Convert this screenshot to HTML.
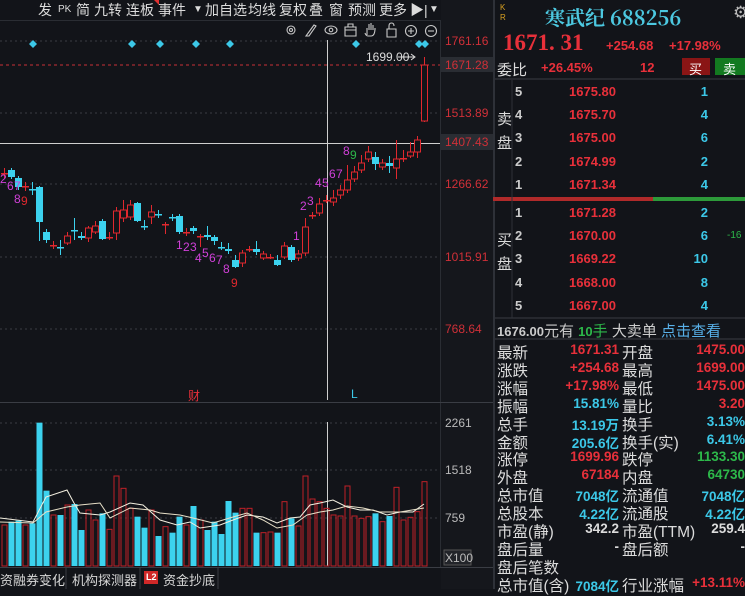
<!DOCTYPE html>
<html><head><meta charset="utf-8">
<style>
*{margin:0;padding:0;box-sizing:border-box}
body{width:745px;height:589px;background:#121419;overflow:hidden;position:relative;font-family:"Liberation Sans","Noto Sans CJK SC",sans-serif;color:#d8d8d8}
.a{position:absolute;white-space:nowrap}
.tb{font-size:14px;color:#dcdcdc;top:0px}
.r{color:#e8303a}.c{color:#3cc8e8}.g{color:#2db84a}.w{color:#dcdcdc}
.ax{font-size:12px;color:#d03038;left:445px}
.ob{font-size:13px;font-weight:bold}
.st{font-size:15.5px}
.sv{font-size:13.5px;font-weight:bold;text-align:right}
</style></head><body>
<svg class="a" style="left:0;top:0" width="745" height="589" id="sv">
<rect x="0" y="20" width="440" height="1" fill="#2a2d33"/>
<rect x="441" y="0" width="52" height="589" fill="#15171c"/>
<rect x="440" y="20" width="1" height="548" fill="#2a2d33"/>
<rect x="0" y="402" width="493" height="1" fill="#3a3d44"/>
<rect x="0" y="567" width="493" height="1" fill="#3a3d44"/>
<rect x="493" y="0" width="2" height="589" fill="#2e3138"/>
<g stroke="#3a3d44" stroke-dasharray="2,3">
<line x1="0" y1="41" x2="440" y2="41"/><line x1="0" y1="113" x2="440" y2="113"/><line x1="0" y1="184" x2="440" y2="184"/><line x1="0" y1="257" x2="440" y2="257"/><line x1="0" y1="329" x2="440" y2="329"/>
<line x1="0" y1="423" x2="440" y2="423"/><line x1="0" y1="470" x2="440" y2="470"/><line x1="0" y1="518" x2="440" y2="518"/>
</g>
<line x1="0" y1="65" x2="440" y2="65" stroke="#c83038" stroke-dasharray="3,3"/>
<line x1="327.5" y1="40" x2="327.5" y2="400" stroke="#cfcfcf"/>
<line x1="327.5" y1="422" x2="327.5" y2="566" stroke="#cfcfcf"/>
<line x1="0" y1="143.5" x2="440" y2="143.5" stroke="#cfcfcf"/>
<g id="cd"></g><g id="vb"></g>
<polyline fill="none" stroke="#f4f0e0" stroke-width="1" points="0,518 33,522 46,497 67,490 74,503 80,513 100,515 110,512 130,503 143,505 160,520 177,525 190,522 200,528 220,525 233,520 247,515 263,517 277,523 290,518 300,517 310,505 320,503 333,500 347,507 360,510 373,510 387,515 400,512 413,512 424,504"/>
<polyline fill="none" stroke="#e8e0c8" stroke-width="1" points="0,522 33,523 46,512 67,507 80,505 100,503 110,518 130,508 150,510 160,513 180,515 193,518 213,523 233,517 247,513 263,520 277,528 293,525 307,515 320,512 333,510 347,506 363,508 380,512 400,512 424,508"/>
<g fill="#3cc8e8" id="dm"></g>
<line x1="398" y1="57" x2="414" y2="57" stroke="#ddd"/><path d="M411,54 L415,57 L411,60" stroke="#ddd" fill="none"/>
<g stroke="#c8c8c8" fill="none" stroke-width="1.1">
<circle cx="291" cy="30" r="4"/><circle cx="291" cy="30" r="1.5"/>
<path d="M306,36 L314,25 L316,26 L309,36 Z"/>
<ellipse cx="331" cy="30" rx="6" ry="4"/><circle cx="331" cy="30" r="1.8"/>
<path d="M345,27 h11 v9 h-11 Z M348,27 v-3 h5 v3 M345,30 h11"/>
<path d="M367,35 v-7 M369,30 v-6 M371,30 v-7 M373,30 v-5 M375,30 v-2 q0,8 -4,8 h-3 q-2,0 -3,-3"/>
<path d="M387,29 h9 v8 h-9 Z M389,29 v-3 q0,-3 2.5,-3 q2.5,0 2.5,3"/>
<circle cx="411" cy="31" r="5.5"/><path d="M408,31 h6 M411,28 v6"/>
<circle cx="431" cy="31" r="5.5"/><path d="M428,31 h6"/>
</g>
<rect x="441" y="57" width="52" height="15" fill="#2a2d33"/>
<rect x="441" y="134" width="52" height="16" fill="#2a2d33"/>
<rect x="444" y="550" width="27" height="15" fill="#222429" stroke="#555"/>
<rect x="493" y="197" width="160" height="4" fill="#b02a2a"/><rect x="653" y="197" width="92" height="4" fill="#2d9a3a"/>
<line x1="495" y1="318" x2="745" y2="318" stroke="#3a3d44"/>
<line x1="495" y1="339" x2="745" y2="339" stroke="#3a3d44"/>
<line x1="495" y1="79" x2="745" y2="79" stroke="#3a3d44"/>
<line x1="512" y1="80" x2="512" y2="318" stroke="#2e3138"/>
<rect x="682" y="58" width="28" height="17" fill="#8a1515"/><rect x="715" y="58" width="30" height="17" fill="#137a20"/>
<line x1="66" y1="568" x2="66" y2="589" stroke="#3a3d44"/><line x1="140" y1="568" x2="140" y2="589" stroke="#3a3d44"/><line x1="218" y1="568" x2="218" y2="589" stroke="#3a3d44"/>
<rect x="144" y="571" width="14" height="13" fill="#d02828"/>
</svg>

<div class="a tb" style="left:38px">发</div>
<div class="a tb" style="left:58px;font-size:10px;top:4px">PK</div>
<div class="a tb" style="left:76px">简</div>
<div class="a tb" style="left:94px">九转</div>
<div class="a tb" style="left:126px">连板</div>
<div class="a tb" style="left:158px">事件</div>
<div class="a tb" style="left:193px;font-size:10px;top:4px">▼</div>
<div class="a tb" style="left:205px">加自选</div>
<div class="a tb" style="left:248px">均线</div>
<div class="a tb" style="left:279px">复权</div>
<div class="a tb" style="left:309px">叠</div>
<div class="a tb" style="left:329px">窗</div>
<div class="a tb" style="left:348px">预测</div>
<div class="a tb" style="left:379px">更多</div>
<div class="a tb" style="left:410px">▶|</div>
<div class="a tb" style="left:429px;font-size:10px;top:4px">▼</div>
<div class="a" style="left:154px;top:0;width:0;height:0;border-left:5px solid transparent;border-top:5px solid #e03030"></div>

<div class="a ax" style="top:34px">1761.16</div>
<div class="a ax" style="top:58px">1671.28</div>
<div class="a ax" style="top:106px">1513.89</div>
<div class="a ax" style="top:135px">1407.43</div>
<div class="a ax" style="top:177px">1266.62</div>
<div class="a ax" style="top:250px">1015.91</div>
<div class="a ax" style="top:322px">768.64</div>
<div class="a" style="left:445px;top:416px;font-size:12px;color:#bbb">2261</div>
<div class="a" style="left:445px;top:463px;font-size:12px;color:#bbb">1518</div>
<div class="a" style="left:445px;top:511px;font-size:12px;color:#bbb">759</div>
<div class="a" style="left:445px;top:551px;font-size:12px;color:#bbb">X100</div>
<div class="a" style="left:366px;top:50px;font-size:12px;color:#ddd">1699.00</div>
<div class="a r" style="left:188px;top:387px;font-size:12px">财</div>
<div class="a c" style="left:351px;top:387px;font-size:12px">L</div>

<div class="a" style="left:0;top:570px;font-size:13px">资融券变化</div>
<div class="a" style="left:72px;top:570px;font-size:13px">机构探测器</div>
<div class="a" style="left:146px;top:572px;font-size:9px;color:#fff;font-weight:bold">L2</div>
<div class="a" style="left:163px;top:570px;font-size:13px">资金抄底</div>

<div class="a" style="left:500px;top:3px;font-size:8px;color:#d8a020;line-height:10px">K<br>R</div>
<div class="a" style="left:545px;top:2px;font-size:20px;color:#4cc8e0;font-family:'Noto Serif CJK SC','Liberation Serif',serif;font-weight:bold">寒武纪 688256</div>
<div class="a" style="left:733px;top:3px;font-size:17px;color:#bbb">⚙</div>
<div class="a r" style="left:503px;top:30px;font-size:23px;font-family:'Liberation Serif',serif;font-weight:bold">1671. 31</div>
<div class="a r" style="left:606px;top:38px;font-size:13px;font-weight:bold">+254.68</div>
<div class="a r" style="left:669px;top:38px;font-size:13px;font-weight:bold">+17.98%</div>
<div class="a w" style="left:497px;top:59px;font-size:15px">委比</div>
<div class="a r" style="left:541px;top:60px;font-size:13px;font-weight:bold">+26.45%</div>
<div class="a r" style="left:640px;top:60px;font-size:13px;font-weight:bold">12</div>
<div class="a" style="left:689px;top:59px;font-size:13px;color:#fff">买</div>
<div class="a" style="left:723px;top:59px;font-size:13px;color:#fff">卖</div>

<div class="a w" style="left:497px;top:108px;font-size:15px;line-height:24px">卖<br>盘</div>
<div class="a w" style="left:497px;top:229px;font-size:15px;line-height:24px">买<br>盘</div>
<div id="ob"></div>
<div class="a g" style="left:727px;top:230px;font-size:10px">-16</div>

<div class="a" style="left:497px;top:320px;font-size:15px;color:#ccc"><b style="font-size:13px">1676.00</b>元有 <span class="g"><b style="font-size:13px">10</b>手</span> 大卖单 <span class="c" style="color:#58b0e8">点击查看</span></div>
<div id="st"></div>

<script>
var C=[[4,173,173,168,178,1],[11,170,177,168,179,0],[18,178,187,176,190,0],[25,186,186,182,191,1],[32,189,189,182,195,0],[39,187,222,186,241,0],[46,232,240,229,243,0],[53,245,245,241,249,1],[60,247,247,240,255,0],[67,236,243,232,245,1],[74,230,230,218,240,0],[81,236,238,232,240,0],[88,228,238,226,242,1],[95,226,232,221,234,1],[102,221,239,219,240,0],[109,237,237,232,240,1],[116,211,233,207,240,1],[123,210,218,200,222,1],[130,205,217,200,220,1],[137,203,221,202,222,0],[144,226,226,220,230,0],[151,212,217,205,224,1],[158,214,214,210,218,0],[165,224,224,222,234,1],[172,217,217,214,221,0],[179,216,232,214,234,0],[186,232,232,228,236,1],[193,228,231,226,234,0],[200,236,236,234,247,1],[207,235,237,226,240,0],[214,237,241,235,245,0],[221,247,247,242,250,0],[228,249,251,243,254,0],[235,260,267,255,268,0],[242,253,263,250,267,1],[249,249,249,246,252,1],[256,249,252,241,255,0],[263,254,258,251,260,1],[270,257,257,254,259,1],[277,260,265,255,266,0],[284,246,257,242,259,1],[291,247,260,245,262,0],[298,254,258,250,261,1],[305,227,253,218,256,1],[312,215,215,212,219,1],[319,204,213,198,216,1],[326,200,200,195,203,1],[333,198,202,190,206,1],[340,190,195,185,199,1],[347,180,190,165,193,1],[354,172,179,166,182,1],[361,163,170,155,173,1],[368,152,159,146,162,1],[375,157,164,152,170,0],[382,163,167,159,170,1],[389,163,166,156,173,0],[396,159,168,140,179,1],[403,158,158,150,162,1],[410,152,156,142,158,1],[417,140,152,136,158,1],[424,65,121,57,122,1]];
var s='';C.forEach(function(d){var col=d[5]?'#e0282e':'#3cd2ee';var t=Math.min(d[1],d[2]),b=Math.max(d[1],d[2]);s+='<line x1="'+(d[0]+.5)+'" y1="'+d[3]+'" x2="'+(d[0]+.5)+'" y2="'+d[4]+'" stroke="'+col+'"/>';if(b-t<1.5){s+='<rect x="'+(d[0]-3)+'" y="'+t+'" width="7" height="1.5" fill="'+col+'"/>'}else if(d[5]){s+='<rect x="'+(d[0]-2.5)+'" y="'+t+'" width="6" height="'+(b-t)+'" fill="#121419" stroke="'+col+'"/>'}else{s+='<rect x="'+(d[0]-3)+'" y="'+t+'" width="7" height="'+(b-t)+'" fill="'+col+'"/>'}});
var V=[[375,1],[365,0],[362,0],[375,1],[370,0],[68,0],[272,0],[345,1],[345,0],[315,1],[312,0],[390,0],[330,1],[360,1],[340,0],[388,1],[228,1],[265,1],[325,1],[350,0],[383,0],[330,1],[408,0],[380,1],[398,0],[350,0],[375,1],[318,0],[360,1],[390,0],[365,0],[402,0],[303,0],[338,0],[325,1],[325,1],[398,0],[398,1],[396,1],[398,0],[305,1],[355,0],[378,1],[228,1],[297,1],[305,1],[325,1],[345,1],[348,1],[258,1],[348,1],[355,1],[350,1],[340,0],[365,1],[348,0],[262,1],[360,1],[352,1],[335,1],[245,1]];
var v='';V.forEach(function(d,i){var x=4+7*i,y=400+d[0]/3;if(d[1])v+='<rect x="'+(x-2)+'" y="'+y+'" width="5" height="'+(566-y)+'" fill="none" stroke="#c02028"/>';else v+='<rect x="'+(x-2.5)+'" y="'+y+'" width="6" height="'+(566-y)+'" fill="#3cd2ee"/>';});
var dm='';[33,132,160,196,230,356,419,425].forEach(function(x){dm+='<path d="M'+x+',40 l4,4 l-4,4 l-4,-4 Z"/>'});
document.getElementById('cd').innerHTML=s;document.getElementById('vb').innerHTML=v;document.getElementById('dm').innerHTML=dm;
var L=[[0,183,"2"],[7,190,"6"],[14,190,"7"],[14,203,"8"],[21,205,"9",'#e0282e'],[176,249,"1"],[183,251,"2"],[190,251,"3"],[195,262,"4"],[202,257,"5"],[209,262,"6"],[216,264,"7"],[223,273,"8"],[231,287,"9",'#e0282e'],[293,240,"1"],[300,210,"2"],[307,205,"3"],[315,187,"4"],[322,187,"5"],[329,178,"6"],[336,178,"7"],[343,155,"8"],[350,159,"9",'#2db84a']];
var l='';L.forEach(function(d){l+='<text x="'+d[0]+'" y="'+d[1]+'" font-size="12" fill="'+(d[3]||'#d040d8')+'" font-family="Liberation Sans">'+d[2]+'</text>'});
document.getElementById('cd').innerHTML+=l;
var O=[[5,"1675.80",1],[4,"1675.70",4],[3,"1675.00",6],[2,"1674.99",2],[1,"1671.34",4],[1,"1671.28",2],[2,"1670.00",6],[3,"1669.22",10],[4,"1668.00",8],[5,"1667.00",4]];
var YY=[92,115,138,162,185,213,236,259,283,306],o='';
O.forEach(function(d,i){var y=YY[i]-8;o+='<div class="a ob w" style="left:515px;top:'+y+'px;color:#ccc">'+d[0]+'</div><div class="a ob r" style="left:569px;top:'+y+'px">'+d[1]+'</div><div class="a ob c" style="left:680px;top:'+y+'px;width:28px;text-align:right">'+d[2]+'</div>'});
document.getElementById('ob').innerHTML=o;
var S=[["最新","1671.31","r","开盘","1475.00","r"],["涨跌","+254.68","r","最高","1699.00","r"],["涨幅","+17.98%","r","最低","1475.00","r"],["振幅","15.81%","c","量比","3.20","r"],["总手","13.19万","c","换手","3.13%","c"],["金额","205.6亿","c","换手(实)","6.41%","c"],["涨停","1699.96","r","跌停","1133.30","g"],["外盘","67184","r","内盘","64730","g"],["总市值","7048亿","c","流通值","7048亿","c"],["总股本","4.22亿","c","流通股","4.22亿","c"],["市盈(静)","342.2","w","市盈(TTM)","259.4","w"],["盘后量","-","w","盘后额","-","w"],["盘后笔数","","w","","",""],["总市值(含)","7084亿","c","行业涨幅","+13.11%","r"]];
var t='';S.forEach(function(d,i){var y=341+i*17.9;t+='<div class="a st w" style="left:497px;top:'+y+'px">'+d[0]+'</div><div class="a sv '+d[2]+'" style="left:560px;width:59px;top:'+(y+1)+'px">'+d[1]+'</div><div class="a st w" style="left:622px;top:'+y+'px">'+d[3]+'</div><div class="a sv '+d[5]+'" style="left:660px;width:85px;top:'+(y+1)+'px">'+d[4]+'</div>'});
document.getElementById('st').innerHTML=t;
</script>
</body></html>
